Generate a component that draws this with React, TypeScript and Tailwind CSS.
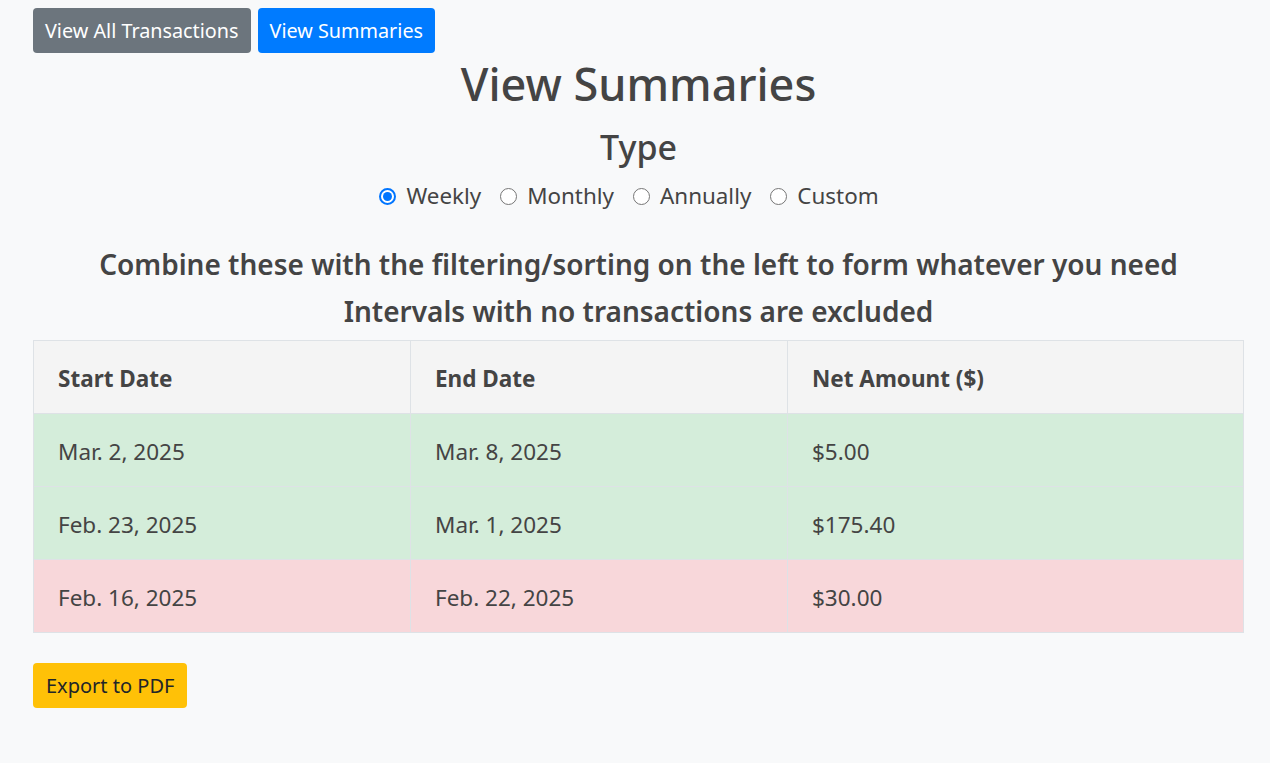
import React, { useState } from "react";

const rows = [
  { start: "Mar. 2, 2025", end: "Mar. 8, 2025", net: "$5.00", bg: "bg-[#d4edda]" },
  { start: "Feb. 23, 2025", end: "Mar. 1, 2025", net: "$175.40", bg: "bg-[#d4edda]" },
  { start: "Feb. 16, 2025", end: "Feb. 22, 2025", net: "$30.00", bg: "bg-[#f8d7da]" },
];

const types = ["Weekly", "Monthly", "Annually", "Custom"];

function Radio({ checked }: { checked: boolean }) {
  return checked ? (
    <span className="w-[17px] h-[17px] rounded-full border-2 border-[#0075ff] bg-white flex items-center justify-center">
      <span className="w-[9px] h-[9px] rounded-full bg-[#0075ff]" />
    </span>
  ) : (
    <span className="w-[17px] h-[17px] rounded-full border border-[#767676] bg-white" />
  );
}

export default function App() {
  const [type, setType] = useState("Weekly");
  return (
    <div
      className="min-h-screen w-full bg-[#f8f9fa] text-[#444] pl-[33px] pr-[26px] pt-2"
      style={{ fontFamily: '"Noto Sans", "Open Sans", sans-serif' }}
    >
      <div className="flex gap-[7px]">
        <button className="h-[45px] px-[12px] rounded bg-[#6c757d] text-white text-[19.8px] leading-none">
          View All Transactions
        </button>
        <button className="h-[45px] px-[12px] rounded bg-[#007bff] text-white text-[19.8px] leading-none">
          View Summaries
        </button>
      </div>

      <div className="flex flex-col items-center">
        <h1 className="h-[60px] flex items-center text-[45px] font-medium leading-none">
          View Summaries
        </h1>
        <h2 className="h-[68px] flex items-center text-[34px] font-medium leading-none">
          Type
        </h2>
        <div className="h-[30px] flex items-center text-[22.4px]">
          {types.map((t) => (
            <label
              key={t}
              className="flex items-center gap-[10px] mr-[19px] cursor-pointer"
              onClick={() => setType(t)}
            >
              <Radio checked={type === t} />
              <span>{t}</span>
            </label>
          ))}
        </div>
        <div className="h-[29px]" />
        <h4 className="h-[47px] flex items-center text-[28px] font-semibold leading-none">
          Combine these with the filtering/sorting on the left to form whatever you need
        </h4>
        <h4 className="h-[47px] flex items-center text-[28px] font-semibold leading-none">
          Intervals with no transactions are excluded
        </h4>
      </div>

      <table className="mt-[6px] w-full border-collapse text-[22.5px]">
        <thead>
          <tr className="h-[73px] bg-[#f4f4f4]">
            <th className="w-[377px] border border-[#dee2e6] px-6 pt-[3px] text-left font-bold">Start Date</th>
            <th className="w-[377px] border border-[#dee2e6] px-6 pt-[3px] text-left font-bold">End Date</th>
            <th className="border border-[#dee2e6] px-6 pt-[3px] text-left font-bold">Net Amount ($)</th>
          </tr>
        </thead>
        <tbody>
          {rows.map((r) => (
            <tr key={r.start} className={`h-[73px] ${r.bg}`}>
              <td className="border border-[#dee2e6] px-6 pt-[3px]">{r.start}</td>
              <td className="border border-[#dee2e6] px-6 pt-[3px]">{r.end}</td>
              <td className="border border-[#dee2e6] px-6 pt-[3px]">{r.net}</td>
            </tr>
          ))}
        </tbody>
      </table>

      <button className="mt-[30px] h-[45px] px-[13px] rounded bg-[#ffc107] text-[#212529] text-[20px] leading-none">
        Export to PDF
      </button>
    </div>
  );
}
